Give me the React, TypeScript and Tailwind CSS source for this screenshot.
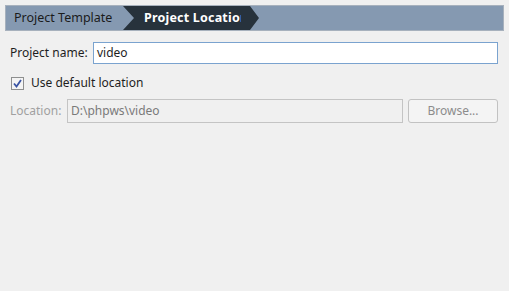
export default function App() {
  return (
    <div className="w-[509px] h-[291px] bg-[#f0f0f0] px-[5px] pt-[5px] text-[12px] text-[#1e1e1e]" style={{ fontFamily: '"Noto Sans", "Open Sans", sans-serif' }}>
      <div className="h-[26px] w-[499px] border border-[#a7b1bd] bg-[#8599b1] flex items-stretch overflow-hidden text-[12.5px]">
        <div className="w-[117px] flex items-center pl-[8px] text-[#1b1b1b] whitespace-nowrap">Project Template</div>
        <div
          className="w-[136px] bg-[#27323c] flex items-center pl-[21px] text-white font-bold whitespace-nowrap overflow-hidden"
          style={{ clipPath: 'polygon(0 0, 127px 0, 136px 50%, 127px 100%, 0 100%, 11px 50%)' }}
        >
          <span className="overflow-hidden block w-[97px] tracking-[0.2px]">Project Location</span>
        </div>
      </div>

      <div className="px-[5px]">
        <div className="flex items-center mt-[11px] h-[22px]">
          <span className="w-[83px] whitespace-nowrap">Project name:</span>
          <div className="flex-1 h-[22px] mr-[1px] bg-white border border-[#7aa3cf] flex items-center pl-[3px]">video</div>
        </div>

        <div className="flex items-center mt-[12px] h-[14px]">
          <span className="w-[13px] h-[13px] ml-[1px] border border-[#8e8f8f] bg-[#f4f4f4] flex items-center justify-center">
            <svg width="9" height="9" viewBox="0 0 9 9">
              <path d="M1 4.5 L3.5 7.5 L8 1" fill="none" stroke="#3a54a4" strokeWidth="1.8" />
            </svg>
          </span>
          <span className="ml-[7px]">Use default location</span>
        </div>

        <div className="flex items-center mt-[9px] h-[24px]">
          <span className="w-[57px] text-[#a0a0a0] whitespace-nowrap">Location:</span>
          <div className="w-[336px] h-[24px] border border-[#c4c4c4] bg-[#f0f0f0] flex items-center pl-[3px] text-[#7a7a7a]">D:\phpws\video</div>
          <div className="w-[90px] h-[24px] ml-[5px] border border-[#c2c2c2] rounded-[3px] bg-[#f4f4f4] flex items-center justify-center text-[#8c8c8c]">Browse...</div>
        </div>
      </div>
    </div>
  )
}
